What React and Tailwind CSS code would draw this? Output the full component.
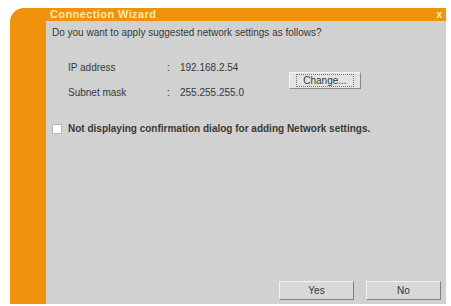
import React from "react";

const App = () => {
  return (
    <div className="w-[451px] h-[306px] bg-white pt-[8px] pl-[10px] font-['Liberation_Sans',Arial,sans-serif]">
      <div className="w-[436px] h-[296px] bg-[#f0920c] rounded-tl-[14px] flex flex-col">
        {/* title bar */}
        <div className="h-[13px] flex items-center justify-between pl-[40px] pr-[4px]">
          <span className="text-[11px] leading-none font-bold text-[#ffe9a8] tracking-[0.4px]">
            Connection Wizard
          </span>
          <span className="text-[10px] leading-none font-bold text-[#fff1c8]">x</span>
        </div>

        <div className="flex flex-1">
          <div className="w-[36px]" />
          {/* body */}
          <div className="flex-1 bg-[#d1d1d1] flex flex-col pl-[6px] pr-[4px] text-[#383838] text-[10px]">
            <p className="mt-[6px] leading-[12px]">
              Do you want to apply suggested network settings as follows?
            </p>

            <div className="flex items-center mt-[23px] pl-[16px]">
              <div className="flex flex-col gap-[13px] leading-[12px]">
                <div className="flex">
                  <span className="w-[99px]">IP address</span>
                  <span className="w-[13px]">:</span>
                  <span>192.168.2.54</span>
                </div>
                <div className="flex">
                  <span className="w-[99px]">Subnet mask</span>
                  <span className="w-[13px]">:</span>
                  <span>255.255.255.0</span>
                </div>
              </div>
              <button className="ml-[45px] w-[72px] h-[17px] bg-[#e4e4e4] border border-[#f4f4f4] border-r-[#8a8a8a] border-b-[#8a8a8a] flex items-center justify-center">
                <span className="border border-dotted border-[#777] px-[6px] leading-[11px] text-[10px]">
                  Change...
                </span>
              </button>
            </div>

            <div className="flex items-center mt-[24px]">
              <span className="w-[10px] h-[10px] bg-white border border-[#b8b8b8]" />
              <span className="ml-[6px] font-bold text-[10px] text-[#3a3a30] leading-[12px]">
                Not displaying confirmation dialog for adding Network settings.
              </span>
            </div>

            <div className="flex-1" />

            <div className="flex justify-end gap-[12px] mb-[4px] mr-[1px]">
              <button className="w-[75px] h-[19px] bg-[#d8d8d8] border border-[#f2f2f2] border-r-[#808080] border-b-[#808080] text-[10px] text-[#333]">
                Yes
              </button>
              <button className="w-[75px] h-[19px] bg-[#d8d8d8] border border-[#f2f2f2] border-r-[#808080] border-b-[#808080] text-[10px] text-[#333]">
                No
              </button>
            </div>
          </div>
        </div>
      </div>
    </div>
  );
};

export default App;
